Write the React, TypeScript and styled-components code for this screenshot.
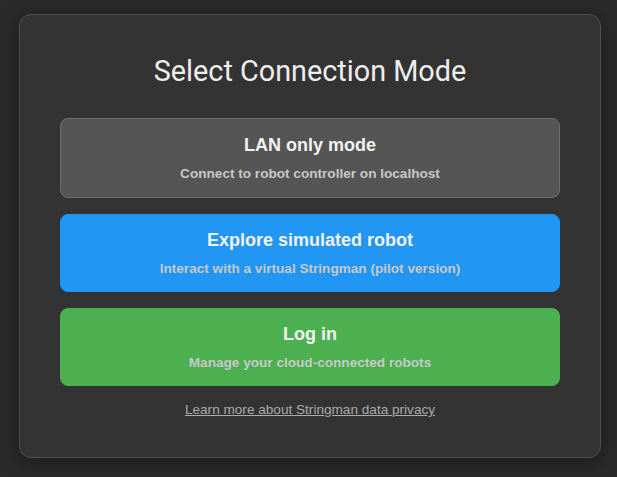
import React from "react";
import styled, { createGlobalStyle } from "styled-components";

const Global = createGlobalStyle`
  html, body { margin: 0; padding: 0; background: #2a2a2a; height: 100%; }
  #root { min-height: 100%; }
  * { box-sizing: border-box; }
`;

const Page = styled.div`
  width: 617px;
  height: 477px;
  display: flex;
  justify-content: flex-start;
  padding: 14px 0 0 19px;
  background: #2a2a2a;
`;

const Card = styled.div`
  width: 582px;
  height: 444px;
  background: #333333;
  border: 1px solid #505050;
  border-radius: 12px;
  box-shadow: 0 4px 20px rgba(0, 0, 0, 0.35);
  padding: 39px 40px 40px;
  display: flex;
  flex-direction: column;
  align-items: stretch;
`;

const Title = styled.h2`
  margin: 0 0 30px;
  font-family: Roboto, "Liberation Sans", sans-serif;
  font-weight: 400;
  font-size: 28.8px;
  line-height: 34px;
  color: #eeeeee;
  text-align: center;
`;

const Options = styled.div`
  display: flex;
  flex-direction: column;
  gap: 16px;
`;

const variants = {
  lan: { bg: "#555555", border: "#6e6e6e", height: 80 },
  sim: { bg: "#2196f3", border: "#2196f3", height: 78 },
  login: { bg: "#4caf50", border: "#4caf50", height: 78 },
};

type Variant = keyof typeof variants;

const OptionButton = styled.button<{ $variant: Variant }>`
  height: ${(p) => variants[p.$variant].height}px;
  background: ${(p) => variants[p.$variant].bg};
  border: 1px solid ${(p) => variants[p.$variant].border};
  border-radius: 8px;
  display: flex;
  flex-direction: column;
  align-items: center;
  justify-content: center;
  gap: 10px;
  cursor: pointer;
  font-family: "Liberation Sans", Arial, sans-serif;
  padding: 0 16px;
`;

const OptionTitle = styled.span`
  font-family: "Liberation Sans", Arial, sans-serif;
  font-size: 18px;
  font-weight: 700;
  line-height: 22px;
  color: #f2f2f2;
`;

const OptionSub = styled.span`
  font-family: "Liberation Sans", Arial, sans-serif;
  font-size: 13.6px;
  font-weight: 700;
  line-height: 16px;
  color: #c8c8c8;
`;

const Privacy = styled.a`
  margin-top: 16px;
  align-self: center;
  font-family: "Liberation Sans", Arial, sans-serif;
  font-size: 13.6px;
  line-height: 16px;
  color: #aaaaaa;
  text-decoration: underline;
  cursor: pointer;
`;

const options: { v: Variant; title: string; sub: string }[] = [
  { v: "lan", title: "LAN only mode", sub: "Connect to robot controller on localhost" },
  { v: "sim", title: "Explore simulated robot", sub: "Interact with a virtual Stringman (pilot version)" },
  { v: "login", title: "Log in", sub: "Manage your cloud-connected robots" },
];

export default function App() {
  return (
    <>
      <Global />
      <Page>
        <Card>
          <Title>Select Connection Mode</Title>
          <Options>
            {options.map((o) => (
              <OptionButton key={o.v} $variant={o.v}>
                <OptionTitle>{o.title}</OptionTitle>
                <OptionSub>{o.sub}</OptionSub>
              </OptionButton>
            ))}
          </Options>
          <Privacy>Learn more about Stringman data privacy</Privacy>
        </Card>
      </Page>
    </>
  );
}
